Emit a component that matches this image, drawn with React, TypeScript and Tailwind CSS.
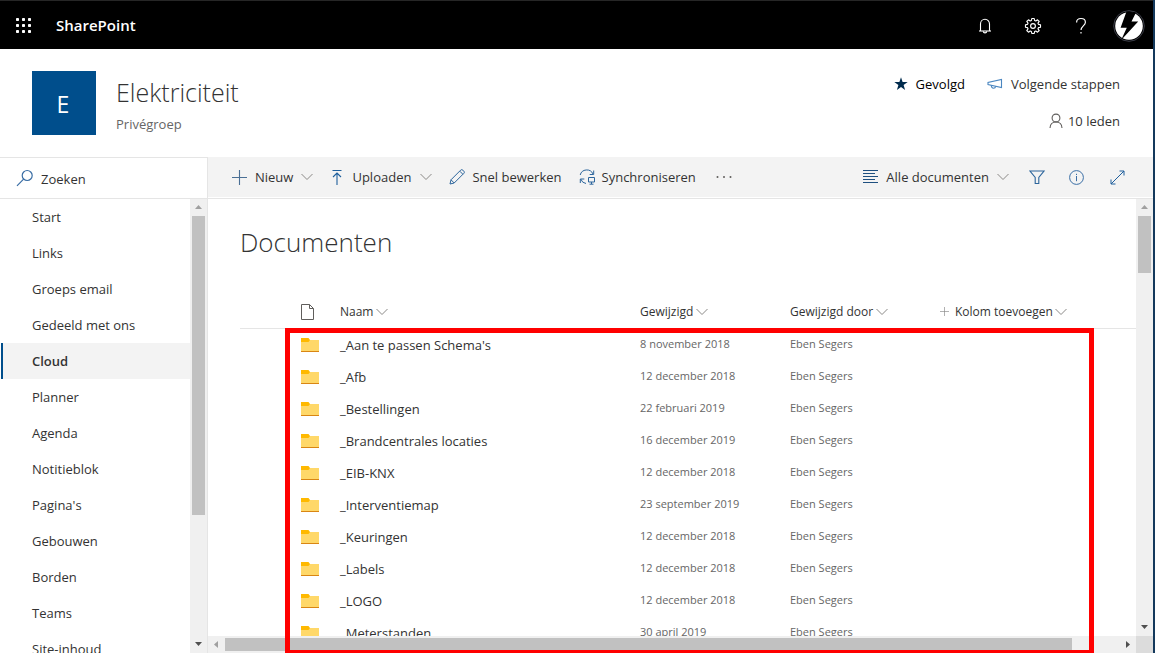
import React from "react";

type IconProps = { className?: string };

const navItems = [
  "Start",
  "Links",
  "Groeps email",
  "Gedeeld met ons",
  "Cloud",
  "Planner",
  "Agenda",
  "Notitieblok",
  "Pagina's",
  "Gebouwen",
  "Borden",
  "Teams",
  "Site-inhoud",
];

const rows = [
  { name: "_Aan te passen Schema's", modified: "8 november 2018" },
  { name: "_Afb", modified: "12 december 2018" },
  { name: "_Bestellingen", modified: "22 februari 2019" },
  { name: "_Brandcentrales locaties", modified: "16 december 2019" },
  { name: "_EIB-KNX", modified: "12 december 2018" },
  { name: "_Interventiemap", modified: "23 september 2019" },
  { name: "_Keuringen", modified: "12 december 2018" },
  { name: "_Labels", modified: "12 december 2018" },
  { name: "_LOGO", modified: "12 december 2018" },
  { name: "_Meterstanden", modified: "30 april 2019" },
];

function Waffle() {
  return (
    <svg width="15" height="15" viewBox="0 0 15 15" fill="#fff">
      {[0, 6, 12].map((y) =>
        [0, 6, 12].map((x) => <rect key={`${x}-${y}`} x={x} y={y} width="3" height="3" rx="0.8" />),
      )}
    </svg>
  );
}

function Bell() {
  return (
    <svg width="16" height="16" viewBox="0 0 16 16" fill="none" stroke="#fff" strokeWidth="1.1">
      <path d="M3.5 13V6a4.500 4.700 0 0 1 9 0v7" />
      <path d="M2 13h12" />
      <path d="M6.300 13.200a1.700 1.700 0 0 0 3.400 0" />
    </svg>
  );
}

function Gear() {
  return (
    <svg width="18" height="18" viewBox="0 0 18 18" fill="none" stroke="#fff" strokeWidth="1.15" strokeLinejoin="round">
      <path d="M7.8 1.500h2.400l.4 2 1.200.5 1.700-1.200 1.700 1.700L14 6.200l.5 1.200 2 .4v2.400l-2 .4-.5 1.200 1.200 1.700-1.700 1.700-1.700-1.200-1.200.5-.4 2H7.800l-.4-2-1.200-.5-1.700 1.200-1.700-1.700L4 11.800l-.5-1.200-2-.4V7.800l2-.4L4 6.200 2.800 4.500l1.700-1.700L6.200 4l1.200-.5z" />
      <circle cx="9" cy="9" r="2.4" />
    </svg>
  );
}

function Help() {
  return (
    <svg width="12" height="18" viewBox="0 0 12 18" fill="none" stroke="#fff" strokeWidth="1.2">
      <path d="M1.6 5.400C1.600 3 3.400 1.500 6 1.500s4.400 1.600 4.400 3.800c0 3.400-4.400 3.800-4.400 7.700" />
      <path d="M6 15v1.600" />
    </svg>
  );
}

function Avatar() {
  return (
    <svg width="32" height="32" viewBox="0 0 32 32">
      <circle cx="16" cy="16" r="15.3" fill="#000" stroke="#3d3f4a" strokeWidth="1" />
      <circle cx="16" cy="16" r="13.8" fill="#fff" />
      <path d="M13.500 1.600 23 2.400 18.500 11.400h6.700L8.200 30l5.600-12.200H7.600z" fill="#000" />
    </svg>
  );
}

function Star() {
  return (
    <svg width="14" height="14" viewBox="0 0 14 14" fill="#002b4d">
      <path d="M7 .3 8.600 5h5.100L9.600 8.100l1.500 5L7 10.100l-4.100 3 1.500-5L.3 5h5.100z" />
    </svg>
  );
}

function Megaphone() {
  return (
    <svg width="16" height="12" viewBox="0 0 16 12" fill="none" stroke="#4a86c0" strokeWidth="1.1">
      <path d="M14.500 1.500v8L1 6.500v-2z" />
      <path d="M4.300 7.300c0 2 .8 2.900 2.200 2.900 1.200 0 2-.7 2.200-1.900" />
    </svg>
  );
}

function Person() {
  return (
    <svg width="14" height="16" viewBox="0 0 14 16" fill="none" stroke="#605e5c" strokeWidth="1.1">
      <circle cx="7" cy="5" r="3.9" />
      <path d="M1 15c.2-3.800 2.600-6 6-6s5.800 2.200 6 6" />
    </svg>
  );
}

function SearchGlyph() {
  return (
    <svg width="18" height="18" viewBox="0 0 18 18" fill="none" stroke="#3a6ea5" strokeWidth="1.2">
      <circle cx="11.200" cy="6.500" r="5" />
      <path d="M7.600 10.200 1 16.800" />
    </svg>
  );
}

function Plus({ className }: IconProps) {
  return (
    <svg className={className} viewBox="0 0 15 15" fill="none" strokeWidth="1.1" stroke="currentColor">
      <path d="M7.500 0v15M0 7.500h15" />
    </svg>
  );
}

function Chevron() {
  return (
    <svg className="shrink-0" width="12" height="8" viewBox="0 0 12 8" fill="none" stroke="#8a8886" strokeWidth="1">
      <path d="m.5 1 5.500 5.500L11.500 1" />
    </svg>
  );
}

function UploadGlyph() {
  return (
    <svg width="12" height="16" viewBox="0 0 12 16" fill="none" stroke="#1f5f9c" strokeWidth="1.1">
      <path d="M1.500 1.500h9M6 4v12M2 8l4-4 4 4" />
    </svg>
  );
}

function Pencil() {
  return (
    <svg width="16" height="16" viewBox="0 0 16 16" fill="none" stroke="#2c659c" strokeWidth="1" strokeLinejoin="round">
      <path d="m1 15 1-4.200L11.600 1.200a1.600 1.600 0 0 1 2.300 0l.9.9a1.600 1.600 0 0 1 0 2.300L5.200 14z" />
      <path d="m10.800 2.200 3 3M2 10.800 5.200 14" />
    </svg>
  );
}

function Sync() {
  return (
    <svg width="16" height="16" viewBox="0 0 16 16" fill="none" stroke="#2c659c" strokeWidth="1">
      <path d="M1.200 6A6.800 6.800 0 0 1 14 5M14.700 1.500v4h-4" />
      <path d="M1.300 14v-4h4M1.800 10.200A6.500 6.500 0 0 0 7 14.500" />
      <path d="M9.500 8.500h6v4.500h-6zM12.500 13v2M10.500 15.200h4" />
    </svg>
  );
}

function ListGlyph() {
  return (
    <svg width="15" height="14" viewBox="0 0 15 14" stroke="#1f5080" strokeWidth="1" fill="none">
      <path d="M0 .5h15M0 3.500h12M0 6.500h15M0 9.500h12M0 12.500h15" />
    </svg>
  );
}

function Funnel() {
  return (
    <svg width="16" height="15" viewBox="0 0 16 15" fill="none" stroke="#2c659c" strokeWidth="1.1">
      <path d="M1 1h14L9.800 7.500v6H6.200v-6z" />
    </svg>
  );
}

function Info() {
  return (
    <svg width="15" height="15" viewBox="0 0 15 15" fill="none" stroke="#3a6ea5" strokeWidth="1">
      <circle cx="7.500" cy="7.500" r="6.900" />
      <path d="M7.500 6v5.200M7.500 3.800v1.200" />
    </svg>
  );
}

function Expand() {
  return (
    <svg width="15" height="15" viewBox="0 0 15 15" fill="none" stroke="#1f5f9c" strokeWidth="1">
      <path d="m1 14 13-13M9.500 1H14v4.500M1 9.500V14h4.500" />
    </svg>
  );
}

function FileGlyph() {
  return (
    <svg width="13" height="16" viewBox="0 0 13 16" fill="none" stroke="#605e5c" strokeWidth="1">
      <path d="M.5.500h8l4 4v11H.5zM8.500.500v4h4" />
    </svg>
  );
}

function Folder() {
  return (
    <svg className="block" width="18" height="14" viewBox="0 0 18 14">
      <path d="M0 1h18v13H0z" fill="#ffd869" />
      <path d="M8 0h10v2H8z" fill="#fff" />
      <path d="M0 0h7.500l1.500 2-1.500 2H0z" fill="#ffb900" />
      <path d="M0 13h18v1H0z" fill="#d98613" />
    </svg>
  );
}

function Arrow({ points, fill = "#505050" }: { points: string; fill?: string }) {
  return (
    <svg className="block" width="17" height="17" viewBox="0 0 17 17">
      <polygon points={points} fill={fill} />
    </svg>
  );
}

const UP = "5,10 12,10 8.500,6";
const DOWN = "5,6 12,6 8.500,10";
const LEFT = "10,5 10,12 6,8.500";
const RIGHT = "7,5 7,12 11,8.500";

function VerticalScrollbar({ long }: { long?: boolean }) {
  return (
    <div aria-hidden="true" className="flex w-[17px] shrink-0 flex-col bg-[#f0f0f0]">
      <Arrow points={UP} fill="#a0a0a0" />
      <div className="flex-1 px-0.5">
        <div className={long ? "h-[299px] bg-[#c1c1c1]" : "h-[57px] bg-[#c1c1c1]"} />
      </div>
      <Arrow points={DOWN} />
    </div>
  );
}

function Label({ children }: { children: string }) {
  return <span className="leading-5 whitespace-nowrap">{children}</span>;
}

function HeaderCell({ label }: { label: string }) {
  return (
    <button type="button" className="flex items-center gap-[3px] leading-5 whitespace-nowrap">
      {label}
      <Chevron />
    </button>
  );
}

export default function App() {
  return (
    <div className="flex h-screen flex-col overflow-hidden border-r-2 border-[#14395c] bg-white font-['Open_Sans','Noto_Sans',sans-serif] text-[13px] text-[#333]">
      <header className="flex h-[49px] shrink-0 items-center border-t border-[#262626] bg-black pl-4 text-white">
        <button type="button" aria-label="Apps">
          <Waffle />
        </button>
        <a href="#" className="ml-[25px] text-[15px] font-semibold">
          SharePoint
        </a>
        <div className="ml-auto flex items-center pt-0.5">
          <button type="button" aria-label="Meldingen" className="flex w-12 justify-center">
            <Bell />
          </button>
          <button type="button" aria-label="Instellingen" className="flex w-12 justify-center">
            <Gear />
          </button>
          <button type="button" aria-label="Help" className="flex w-12 justify-center">
            <Help />
          </button>
          <button type="button" aria-label="Account" className="flex w-12 justify-center">
            <Avatar />
          </button>
        </div>
      </header>

      <section className="flex h-[108px] shrink-0 items-start pt-[22px] pr-[33px] pl-8">
        <div className="flex size-16 items-center justify-center bg-[#004e8c] pt-0.5 pr-0.5 text-[23px] text-white">E</div>
        <div className="ml-5 pt-[3px]">
          <h1 className="text-[25px] leading-9 font-light">Elektriciteit</h1>
          <p className="leading-7 text-[#666]">Privégroep</p>
        </div>
        <div className="ml-auto flex flex-col items-end gap-[17px] pt-[3px]">
          <div className="flex items-center gap-[22px]">
            <button type="button" className="flex items-center gap-2 leading-5 text-black">
              <Star />
              Gevolgd
            </button>
            <button type="button" className="flex items-center gap-2 leading-5">
              <Megaphone />
              Volgende stappen
            </button>
          </div>
          <button type="button" className="flex items-center gap-[5px] leading-5">
            <Person />
            10 leden
          </button>
        </div>
      </section>

      <div className="flex min-h-0 flex-1">
        <aside className="flex w-[208px] shrink-0 flex-col border-t border-r border-[#e5e5e5]">
          <label className="flex h-10 shrink-0 items-center gap-[7px] pl-4">
            <SearchGlyph />
            <span className="sr-only">Zoeken</span>
            <input
              type="search"
              placeholder="Zoeken"
              className="h-7 w-32 bg-transparent pt-0.5 leading-5 outline-none placeholder:text-[#333] placeholder:opacity-100"
            />
          </label>
          <div className="flex min-h-0 flex-1 border-t border-[#e5e5e5]">
            <nav className="min-w-0 flex-1 overflow-hidden">
              {navItems.map((item) => (
                <a
                  key={item}
                  href="#"
                  className={
                    item === "Cloud"
                      ? "ml-px flex h-9 items-center border-l-2 border-[#004e8c] bg-[#f3f3f3] pt-0.5 pl-[29px] font-semibold"
                      : "flex h-9 items-center pt-0.5 pl-8"
                  }
                >
                  {item}
                </a>
              ))}
            </nav>
            <VerticalScrollbar long />
          </div>
        </aside>

        <main className="flex min-w-0 flex-1 flex-col">
          <div className="flex h-10 shrink-0 items-center bg-[#f3f3f3] pr-7 pl-6">
            <button type="button" className="flex items-center gap-2">
              <Plus className="size-[15px] text-[#4a6f95]" />
              <Label>Nieuw</Label>
              <Chevron />
            </button>
            <button type="button" className="ml-[18px] flex items-center gap-[9px]">
              <UploadGlyph />
              <Label>Uploaden</Label>
              <Chevron />
            </button>
            <button type="button" className="ml-[17px] flex items-center gap-[7px]">
              <Pencil />
              <Label>Snel bewerken</Label>
            </button>
            <button type="button" className="ml-[17px] flex items-center gap-[7px]">
              <Sync />
              <Label>Synchroniseren</Label>
            </button>
            <button type="button" aria-label="Meer" className="ml-5">
              <svg width="16" height="4" viewBox="0 0 16 4" fill="#605e5c">
                <circle cx="1.500" cy="2" r="1" />
                <circle cx="8" cy="2" r="1" />
                <circle cx="14.500" cy="2" r="1" />
              </svg>
            </button>
            <div className="ml-auto flex items-center">
              <button type="button" className="flex items-center gap-2">
                <ListGlyph />
                <Label>Alle documenten</Label>
                <Chevron />
              </button>
              <button type="button" aria-label="Filter" className="ml-5">
                <Funnel />
              </button>
              <button type="button" aria-label="Info" className="ml-6">
                <Info />
              </button>
              <button type="button" aria-label="Uitvouwen" className="ml-[26px]">
                <Expand />
              </button>
            </div>
          </div>

          <div className="relative mt-px flex min-h-0 flex-1 flex-col border-t border-[#e5e5e5]">
            <div className="flex min-h-0 flex-1">
              <div className="min-w-0 flex-1 overflow-hidden pl-8">
                <h2 className="pt-[23px] text-[26px] leading-10 font-light">Documenten</h2>
                <table className="mt-[33px] w-full table-fixed border-separate border-spacing-0 text-left">
                  <thead>
                    <tr className="h-[34px] text-[12px] *:border-b *:border-[#e5e5e5]">
                      <th className="w-[100px] pl-[61px] font-normal">
                        <FileGlyph />
                      </th>
                      <th className="w-[300px] font-normal">
                        <HeaderCell label="Naam" />
                      </th>
                      <th className="w-[150px] font-normal">
                        <HeaderCell label="Gewijzigd" />
                      </th>
                      <th className="w-[150px] font-normal">
                        <HeaderCell label="Gewijzigd door" />
                      </th>
                      <th className="font-normal">
                        <button type="button" className="flex items-center gap-0.5 leading-5 whitespace-nowrap">
                          <Plus className="mr-1 size-[9px] text-[#888]" />
                          Kolom toevoegen
                          <Chevron />
                        </button>
                      </th>
                    </tr>
                  </thead>
                  <tbody>
                    {rows.map((row) => (
                      <tr key={row.name} className="h-8">
                        <td className="pl-[61px]">
                          <Folder />
                        </td>
                        <td className="leading-5">
                          <a href="#">{row.name}</a>
                        </td>
                        <td className="pb-0.5 text-[11px] leading-4 text-[#666]">{row.modified}</td>
                        <td className="pb-0.5 text-[11px] leading-4 text-[#666]">Eben Segers</td>
                        <td />
                      </tr>
                    ))}
                  </tbody>
                </table>
              </div>
              <VerticalScrollbar />
            </div>
            <div aria-hidden="true" className="flex h-[17px] shrink-0 bg-[#f0f0f0]">
              <Arrow points={LEFT} fill="#a0a0a0" />
              <div className="flex-1 py-0.5 pr-[47px]">
                <div className="h-full bg-[#c1c1c1]" />
              </div>
              <Arrow points={RIGHT} />
              <div className="w-[17px] bg-[#dcdcdc]" />
            </div>
            <div className="pointer-events-none absolute top-[129px] right-[59px] bottom-0 left-[77px] border-5 border-b-3 border-[#f00]" />
          </div>
        </main>
      </div>
    </div>
  );
}
